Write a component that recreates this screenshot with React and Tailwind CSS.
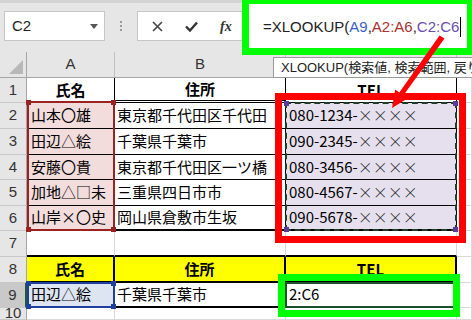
const jp = "font-['Noto_Sans_CJK_JP','Noto_Sans',sans-serif]"
const sans = "font-['Liberation_Sans','Noto_Sans_CJK_JP',sans-serif]"

const Cell = ({ className = "", children }) => (
  <div className={"flex items-center whitespace-nowrap overflow-visible text-[15px] text-black " + jp + " " + className}>
    {children}
  </div>
)

const RowHead = ({ n, active }) => (
  <div
    className={
      "flex items-center justify-center text-[15px] text-[#333] border-b border-[#c8c8c8] " +
      sans +
      (active ? " bg-[#c9c9c9] border-r-2 border-r-[#1e5a36]" : " bg-[#e6e6e6] border-r border-r-[#a6a6a6]")
    }
  >
    {n}
  </div>
)

const Gap = ({ className = "" }) => <div className={"border-r border-b border-[#d9d9d9] " + className} />

const Corner = ({ cls }) => <span className={"absolute w-[5px] h-[5px] " + cls} />

// 電話番号の伏字部分は細めに
const Tel = ({ head }) => (
  <>
    {head}
    <span className="font-light text-[#222]">××××</span>
  </>
)

export default function App() {
  return (
    <div className="relative w-[472px] h-[320px] overflow-hidden bg-white">
      {/* formula bar */}
      <div className="flex items-center h-[52px] bg-[#e6e6e6] border-t-[3px] border-[#d4d4d4] pl-[4px] pb-[3px]">
        <div className="flex items-center justify-between w-[101px] h-[30px] bg-white border border-[#c6c6c6] pl-[7px] pr-[6px]">
          <span className={"text-[15px] text-[#222] " + sans}>C2</span>
          <svg width="8" height="5" viewBox="0 0 8 5">
            <path d="M0 0h8L4 5z" fill="#555" />
          </svg>
        </div>
        <div className="flex flex-col gap-[2px] w-[32px] items-center">
          <span className="w-[2px] h-[2px] bg-[#9a9a9a]" />
          <span className="w-[2px] h-[2px] bg-[#9a9a9a]" />
          <span className="w-[2px] h-[2px] bg-[#9a9a9a]" />
        </div>
        <div className="flex items-center flex-1 h-[30px] bg-white border border-[#c6c6c6] pl-[14px] gap-[22px]">
          <svg width="11" height="11" viewBox="0 0 11 11">
            <path d="M1 1l9 9M10 1l-9 9" stroke="#444" strokeWidth="1.6" />
          </svg>
          <svg width="13" height="11" viewBox="0 0 13 11">
            <path d="M1 5.5l4 4L12 1.5" stroke="#333" strokeWidth="2.4" fill="none" />
          </svg>
          <span className="text-[14px] italic text-[#333] font-['Liberation_Serif',serif] font-bold">fx</span>
        </div>
      </div>

      {/* sheet */}
      <div className="grid grid-cols-[27px_88px_171px_171px_15px] grid-rows-[26px_25px_26px_26px_25px_26px_25px_26px_26px_25px_12px]">
        {/* column headers */}
        <div className="relative bg-[#e6e6e6] border-r border-b border-[#a6a6a6]">
          <svg className="absolute right-[3px] bottom-[3px]" width="14" height="14" viewBox="0 0 14 14">
            <path d="M14 0V14H0z" fill="#b8b8b8" />
          </svg>
        </div>
        <div className={"flex items-center justify-center bg-[#e6e6e6] border-r border-b border-[#a6a6a6] border-r-[#c0c0c0] text-[15px] text-[#333] " + sans}>A</div>
        <div className={"flex items-center justify-center bg-[#e6e6e6] border-r border-b border-[#a6a6a6] border-r-[#c0c0c0] text-[15px] text-[#333] " + sans}>B</div>
        <div className="bg-[#e6e6e6] border-r border-b border-[#a6a6a6] border-r-[#c0c0c0]" />
        <div className="bg-[#e6e6e6] border-b border-[#a6a6a6]" />

        {/* row 1 */}
        <RowHead n="1" />
        <Cell className="justify-center font-bold border-r border-b border-black">氏名</Cell>
        <Cell className="justify-center font-bold border-r border-black border-b-[3px] border-double">住所</Cell>
        <Cell className={"justify-center items-start pt-[1px] font-bold border-r border-b border-black " + sans}>TEL</Cell>
        <Gap />

        {/* rows 2-6 */}
        <RowHead n="2" />
        <Cell className="pl-[4px] bg-[#f2dcdc] border-r border-b border-black">山本〇雄</Cell>
        <Cell className="pl-[2px] border-r border-b border-black">東京都千代田区千代田</Cell>
        <Cell className="pl-[3px] bg-[#e6e0ee] border-r border-b border-black"><Tel head="080-1234-" /></Cell>
        <Gap />

        <RowHead n="3" />
        <Cell className="pl-[4px] bg-[#f2dcdc] border-r border-b border-black">田辺△絵</Cell>
        <Cell className="pl-[2px] border-r border-b border-black">千葉県千葉市</Cell>
        <Cell className="pl-[3px] bg-[#e6e0ee] border-r border-b border-black"><Tel head="090-2345-" /></Cell>
        <Gap />

        <RowHead n="4" />
        <Cell className="pl-[4px] bg-[#f2dcdc] border-r border-b border-black">安藤〇貴</Cell>
        <Cell className="pl-[2px] border-r border-b border-black">東京都千代田区一ツ橋</Cell>
        <Cell className="pl-[3px] bg-[#e6e0ee] border-r border-b border-black"><Tel head="080-3456-" /></Cell>
        <Gap />

        <RowHead n="5" />
        <Cell className="pl-[4px] bg-[#f2dcdc] border-r border-b border-black">加地△□未</Cell>
        <Cell className="pl-[2px] border-r border-b border-black">三重県四日市市</Cell>
        <Cell className="pl-[3px] bg-[#e6e0ee] border-r border-b border-black"><Tel head="080-4567-" /></Cell>
        <Gap />

        <RowHead n="6" />
        <Cell className="pl-[4px] bg-[#f2dcdc] border-r border-b-2 border-black">山岸×〇史</Cell>
        <Cell className="pl-[2px] border-r border-b-2 border-black">岡山県倉敷市生坂</Cell>
        <Cell className="pl-[3px] bg-[#e6e0ee] border-r border-b-2 border-black"><Tel head="090-5678-" /></Cell>
        <Gap />

        {/* row 7 */}
        <RowHead n="7" />
        <Gap className="border-b-2 border-b-black" />
        <Gap className="border-b-2 border-b-black" />
        <Gap className="border-b-2 border-b-black" />
        <Gap />

        {/* row 8 */}
        <RowHead n="8" />
        <Cell className="justify-center font-bold bg-[#ffff00] border-r-2 border-b-2 border-black">氏名</Cell>
        <Cell className="justify-center font-bold bg-[#ffff00] border-r-2 border-b-2 border-black">住所</Cell>
        <Cell className={"justify-center font-bold bg-[#ffff00] border-r-2 border-b-2 border-black " + sans}>TEL</Cell>
        <Gap />

        {/* row 9 */}
        <RowHead n="9" active />
        <Cell className="pl-[4px] bg-[#dde5f3] border-r-2 border-b-2 border-black">田辺△絵</Cell>
        <Cell className="pl-[2px] border-r-2 border-b-2 border-black">千葉県千葉市</Cell>
        <Cell className="pl-[3px] border-r-2 border-b-2 border-black">2:C6</Cell>
        <Gap />

        {/* row 10 */}
        <RowHead n="10" />
        <Gap />
        <Gap />
        <Gap />
        <Gap />
      </div>

      {/* range highlights, same grid as the sheet */}
      <div className="absolute left-0 top-[52px] w-[472px] h-[268px] grid grid-cols-[27px_88px_171px_171px_15px] grid-rows-[26px_25px_26px_26px_25px_26px_25px_26px_26px_25px_12px] pointer-events-none">
        <div className="relative col-start-2 row-start-3 row-span-5 -mt-[2px] border-2 border-[#9c2121]">
          <Corner cls="-left-[3px] -top-[3px] bg-[#9c2121]" />
          <Corner cls="-right-[3px] -top-[3px] bg-[#9c2121]" />
          <Corner cls="-left-[3px] -bottom-[3px] bg-[#9c2121]" />
          <Corner cls="-right-[3px] -bottom-[3px] bg-[#9c2121]" />
        </div>
        <div className="relative col-start-4 row-start-3 row-span-5 -mt-[1px] -ml-[1px] border-2 border-dashed border-[#1d3d26]">
          <Corner cls="-left-[3px] -top-[3px] bg-[#5a3d9a]" />
          <Corner cls="-right-[3px] -top-[3px] bg-[#5a3d9a]" />
          <Corner cls="-left-[3px] -bottom-[3px] bg-[#5a3d9a]" />
          <Corner cls="-right-[3px] -bottom-[3px] bg-[#5a3d9a]" />
        </div>
        <div className="relative col-start-2 row-start-10 -mt-[1px] border-2 border-[#1f3f9c]">
          <Corner cls="-left-[3px] -top-[3px] bg-[#1f3f9c]" />
          <Corner cls="-right-[3px] -top-[3px] bg-[#1f3f9c]" />
          <Corner cls="-left-[3px] -bottom-[3px] bg-[#1f3f9c]" />
          <Corner cls="-right-[3px] -bottom-[3px] bg-[#1f3f9c]" />
        </div>
        <div className="col-start-4 row-start-10 -mt-[1px] -ml-[1px] border-2 border-[#1e4d2b]" />
      </div>

      {/* tooltip */}
      <div className={"absolute left-[273px] top-[57px] w-[220px] h-[21px] flex items-center bg-white border border-[#9a9a9a] pl-[7px] text-[13px] text-[#222] whitespace-nowrap " + sans}>
        XLOOKUP(検索値, 検索範囲, 戻り範囲, …
      </div>

      {/* annotation: green box on formula */}
      <div className={"absolute left-[242px] -top-[3px] w-[232px] h-[58px] flex items-center bg-white border-[7px] border-[#00ff00] pl-[14px] pt-[2px] text-[15px] text-[#222] whitespace-nowrap " + sans}>
        <span>=XLOOKUP(</span>
        <span className="text-[#3b5fc8]">A9</span>
        <span>,</span>
        <span className="text-[#a83232]">A2:A6</span>
        <span>,</span>
        <span className="text-[#6a4cb0]">C2:C6</span>
        <span className="w-[1px] h-[20px] bg-black ml-[1px]" />
      </div>

      {/* annotation: red box on C2:C6 */}
      <div className="absolute left-[275px] top-[93px] w-[191px] h-[150px] border-[7px] border-[#ff0000]" />

      {/* annotation: green box on C9 */}
      <div className="absolute left-[278px] top-[274px] w-[182px] h-[43px] border-[7px] border-[#00ff00]" />

      {/* arrow */}
      <svg className="absolute left-0 top-0 pointer-events-none" width="472" height="320" viewBox="0 0 472 320">
        <polygon
          points="444.5,38.5 403.3,95.4 407.5,98.4 392,108 395.2,89.6 399.3,92.6 439.5,35.5"
          fill="#ff0000"
        />
      </svg>
    </div>
  )
}
